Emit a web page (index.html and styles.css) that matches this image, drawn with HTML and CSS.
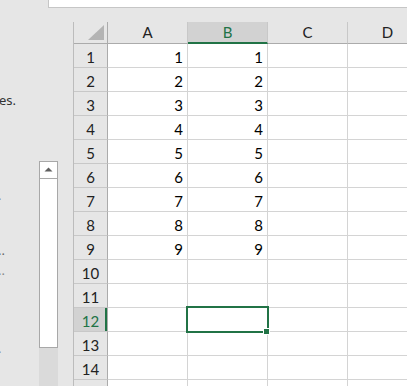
FILE: index.html
```html
<!DOCTYPE html>
<html>
<head>
<meta charset="utf-8">
<link rel="stylesheet" href="styles.css">
</head>
<body>
<div class="app">
  <div class="topbar"><div class="namebox"></div></div>
  <div class="main">
    <aside class="panel">
      <div class="panel-text">
        <p class="ln ln-1">es.</p>
        <p class="ln ln-2">.</p>
        <p class="ln ln-3">..</p>
        <p class="ln ln-4">..</p>
        <p class="ln ln-5">.</p>
      </div>
      <div class="vscroll">
        <div class="vscroll-box">
          <div class="vscroll-up">
            <svg width="9" height="5" viewBox="0 0 9 5"><polygon points="0.5,4.5 4.5,0.5 8.5,4.5" fill="#5f5f5f"/></svg>
          </div>
          <div class="vscroll-track"></div>
        </div>
        <div class="vscroll-rest"></div>
      </div>
    </aside>
    <div class="sheet">
      <div class="hd corner"><svg width="33" height="21" viewBox="0 0 33 21"><polygon points="30,3 30,18 14,18" fill="#b4b4b4"/></svg></div>
      <div class="hd col">A</div>
      <div class="hd col sel">B</div>
      <div class="hd col">C</div>
      <div class="hd col">D</div>

      <div class="rh">1</div><div class="c">1</div><div class="c">1</div><div class="c"></div><div class="c"></div>
      <div class="rh">2</div><div class="c">2</div><div class="c">2</div><div class="c"></div><div class="c"></div>
      <div class="rh">3</div><div class="c">3</div><div class="c">3</div><div class="c"></div><div class="c"></div>
      <div class="rh">4</div><div class="c">4</div><div class="c">4</div><div class="c"></div><div class="c"></div>
      <div class="rh">5</div><div class="c">5</div><div class="c">5</div><div class="c"></div><div class="c"></div>
      <div class="rh">6</div><div class="c">6</div><div class="c">6</div><div class="c"></div><div class="c"></div>
      <div class="rh">7</div><div class="c">7</div><div class="c">7</div><div class="c"></div><div class="c"></div>
      <div class="rh">8</div><div class="c">8</div><div class="c">8</div><div class="c"></div><div class="c"></div>
      <div class="rh">9</div><div class="c">9</div><div class="c">9</div><div class="c"></div><div class="c"></div>
      <div class="rh">10</div><div class="c"></div><div class="c"></div><div class="c"></div><div class="c"></div>
      <div class="rh">11</div><div class="c"></div><div class="c"></div><div class="c"></div><div class="c"></div>
      <div class="rh sel">12</div><div class="c"></div><div class="c active"><span class="handle"></span></div><div class="c"></div><div class="c"></div>
      <div class="rh">13</div><div class="c"></div><div class="c"></div><div class="c"></div><div class="c"></div>
      <div class="rh">14</div><div class="c"></div><div class="c"></div><div class="c"></div><div class="c"></div>
      <div class="rh">15</div><div class="c"></div><div class="c"></div><div class="c"></div><div class="c"></div>
    </div>
  </div>
</div>
</body>
</html>
```

FILE: styles.css
```css
* { box-sizing: border-box; }
html, body {
  margin: 0;
  padding: 0;
  width: 407px;
  height: 386px;
  overflow: hidden;
  background: #e6e6e6;
}
.app {
  width: 407px;
  height: 386px;
  display: flex;
  flex-direction: column;
  overflow: hidden;
}
.topbar {
  height: 22px;
  flex: none;
}
.namebox {
  margin-left: 48px;
  height: 8px;
  background: #ffffff;
  border-left: 1px solid #c6c6c6;
  border-bottom: 1px solid #c6c6c6;
}
.main {
  flex: 1;
  display: flex;
  min-height: 0;
}
.panel {
  width: 73px;
  flex: none;
  display: flex;
}
.panel-text {
  width: 39px;
  flex: none;
  display: flex;
  flex-direction: column;
  font-family: "Noto Sans", sans-serif;
  font-size: 13px;
  line-height: 16px;
  color: #333;
  overflow: hidden;
}
.ln {
  margin: 0;
  height: 16px;
  white-space: nowrap;
}
.ln-1 { margin-top: 70px; margin-left: -1px; }
.ln-2 { margin-top: 79px; color: #888; margin-left: -2px; }
.ln-3 { margin-top: 39px; color: #666; margin-left: -2px; }
.ln-4 { margin-top: 4px; color: #888; margin-left: -2px; }
.ln-5 { margin-top: 62px; color: #888; margin-left: -2px; }
.vscroll {
  width: 19px;
  flex: none;
  margin-top: 139px;
  display: flex;
  flex-direction: column;
}
.vscroll-box {
  border: 1px solid #a8a8a8;
  background: #ffffff;
  display: flex;
  flex-direction: column;
}
.vscroll-up {
  height: 17px;
  border-bottom: 1px solid #a8a8a8;
  display: flex;
  align-items: center;
  justify-content: center;
}
.vscroll-up svg { display: block; margin-top: -2px; }
.vscroll-track {
  height: 168px;
}
.vscroll-rest {
  flex: 1;
  background: #dadada;
}
.sheet {
  flex: none;
  display: grid;
  grid-template-columns: 34px 80px 80px 80px 80px;
  grid-template-rows: 22px;
  grid-auto-rows: 24px;
  border-left: 1px solid #bcbcbc;
  font-family: "Lato", sans-serif;
  font-size: 15px;
  color: #000;
  align-self: flex-start;
}
.hd {
  background: #e6e6e6;
  border-bottom: 1px solid #ababab;
  border-right: 1px solid #c8c8c8;
  line-height: 20px;
  text-align: center;
  color: #222;
}
.hd.corner {
  border-right-color: #ababab;
}
.hd.corner svg { display: block; }
.hd.sel {
  background: #d2d2d2;
  color: #217346;
  border-bottom: 2px solid #217346;
}
.rh {
  background: #e6e6e6;
  border-right: 1px solid #ababab;
  border-bottom: 1px solid #c8c8c8;
  text-align: center;
  line-height: 20px;
  padding-top: 3px;
  color: #222;
}
.rh.sel {
  background: #d2d2d2;
  color: #217346;
  box-shadow: inset -2px 0 0 #217346;
}
.c {
  background: #ffffff;
  border-right: 1px solid #d4d4d4;
  border-bottom: 1px solid #d4d4d4;
  text-align: right;
  line-height: 20px;
  padding-top: 3px;
  padding-right: 4px;
}
.c.active {
  position: relative;
}
.c.active::after {
  content: "";
  position: absolute;
  left: -2px;
  top: -2px;
  right: -2px;
  bottom: -2px;
  border: 2px solid #217346;
}
.handle {
  position: absolute;
  left: 75px;
  top: 20px;
  width: 7px;
  height: 7px;
  background: #217346;
  border: 1px solid #ffffff;
  z-index: 2;
}
```
